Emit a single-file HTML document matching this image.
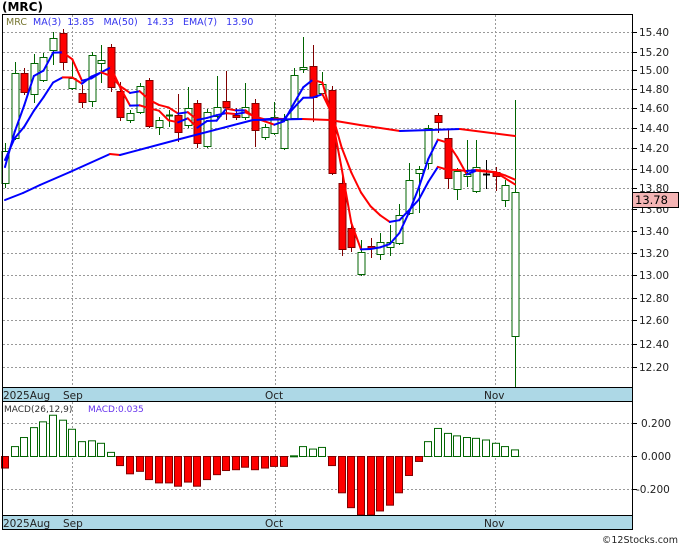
<!DOCTYPE html>
<html><head><meta charset="utf-8"><style>
body{margin:0;background:#fff;width:680px;height:546px;overflow:hidden;font-family:"DejaVu Sans",sans-serif}
svg{position:absolute;left:0;top:0}
</style></head><body>
<svg id="s" width="680" height="546" xmlns="http://www.w3.org/2000/svg" font-family="DejaVu Sans, Liberation Sans, sans-serif">
<rect x="0" y="0" width="680" height="546" fill="#fff"/>
<text x="2" y="11" font-size="12" font-weight="bold">(MRC)</text>
<g id="grid" stroke="#999" stroke-dasharray="2,2" stroke-width="1"></g>
<rect x="2.5" y="387.5" width="630" height="14" fill="#add8e6" stroke="#000"/>
<rect x="2.5" y="515.5" width="630" height="14" fill="#add8e6" stroke="#000"/>
<g font-size="10.5" fill="#222">
<text x="3" y="399">2025Aug</text><text x="63" y="399">Sep</text><text x="265" y="399">Oct</text><text x="484" y="399">Nov</text>
<text x="3" y="527">2025Aug</text><text x="63" y="527">Sep</text><text x="265" y="527">Oct</text><text x="484" y="527">Nov</text>
</g>
<g id="cand"></g>
<g id="lines" fill="none" stroke-width="2"></g>
<g id="macd"></g>
<rect x="2.5" y="14.5" width="630" height="373" fill="none" stroke="#000"/>
<rect x="2.5" y="401.5" width="630" height="114" fill="none" stroke="#000"/>
<g id="ticks" stroke="#000"></g>
<g id="plab" font-size="10.5" fill="#222"></g>
<text x="6" y="25" font-size="9.5" fill="#777733">MRC</text>
<text x="33" y="25" font-size="9.5" fill="#3333ee" xml:space="preserve">MA(3)  13.85   MA(50)   14.33   EMA(7)   13.90</text>
<text x="4" y="412" font-size="9" fill="#333">MACD(26,12,9)</text>
<text x="88" y="412" font-size="9" fill="#6633ee">MACD:0.035</text>
<rect x="632.5" y="192.5" width="46" height="15" fill="#f4b4b4" stroke="#000"/>
<text x="635" y="204" font-size="11.5" fill="#000">13.78</text>
<text x="678" y="543" font-size="9.5" fill="#222" text-anchor="end">©12Stocks.com</text>
</svg>
<script>
var NS="http://www.w3.org/2000/svg";
function el(p,t,a){var e=document.createElementNS(NS,t);for(var k in a)e.setAttribute(k,a[k]);document.getElementById(p).appendChild(e);return e;}
var pl=[[15.4,32],[15.2,52],[15.0,70],[14.8,89],[14.6,108],[14.4,128],[14.2,148],[14.0,169],[13.8,188],[13.6,209],[13.4,231],[13.2,253],[13.0,275],[12.8,298],[12.6,320],[12.4,344],[12.2,367]];
pl.forEach(function(p){el("grid","line",{x1:3,x2:632,y1:p[1]+.5,y2:p[1]+.5});
el("ticks","line",{x1:632,x2:637,y1:p[1]+.5,y2:p[1]+.5});
var t=el("plab","text",{x:639,y:p[1]+4});t.textContent=p[0].toFixed(2);});
[423,456,489].forEach(function(y,i){el("grid","line",{x1:3,x2:632,y1:y+.5,y2:y+.5});el("ticks","line",{x1:632,x2:637,y1:y+.5,y2:y+.5});
var t=el("plab","text",{x:i==2?636:641,y:y+4});t.textContent=["0.200","0.000","-0.200"][i];});
[72,275,495].forEach(function(x){el("grid","line",{x1:x+.5,x2:x+.5,y1:15,y2:387});el("grid","line",{x1:x+.5,x2:x+.5,y1:402,y2:515});});
var C=[["g",151,183,143,188],["g",73,138,62,140],["r",73,92,68,95],["g",63,94,54,103],["g",57,80,53,82],["g",38,50,32,65],["r",33,62,29,70],
["g",78,88,60,90],["r",93,102,85,108],["g",55,101,52,107],["g",60,63,45,83],["r",47,87,44,92],["r",91,117,82,121],["g",113,120,110,123],
["g",86,112,83,114],["r",80,126,78,128],["g",120,127,117,135],["g",115,116,110,127],["r",115,132,94,142],["g",108,125,87,128],
["r",103,143,100,148],["g",112,146,109,148],["g",107,116,76,118],["r",101,107,71,120],["r",115,117,108,120],["g",107,117,83,120],
["r",103,130,99,147],["g",127,137,124,140],["g",117,133,102,135],["g",120,148,114,150],["g",75,118,68,120],["g",67,69,37,73],
["r",66,97,45,122],["g",84,93,72,96],["r",90,173,86,175],["r",183,249,175,256],["r",228,247,225,252],["g",252,274,240,276],
["r",246,248,238,258],["g",242,254,233,260],["g",242,247,225,256],["g",215,243,204,245],["g",180,213,163,215],["g",169,173,166,213],
["g",128,163,125,169],["r",115,122,113,133],["r",138,178,129,189],["g",171,189,168,200],["g",174,176,140,187],["g",167,191,140,193],
["k",174,174,160,189],["r",172,176,167,191],["g",185,200,180,207],["g",192,336,100,387]];
var dx=9.62,x0=5;
var closes=[];
C.forEach(function(c,i){var x=Math.round(x0+dx*i)+.5;
var col=c[0]=="g"?"#006400":c[0]=="r"?"#800000":"#000";
el("cand","line",{x1:x,x2:x,y1:c[3],y2:c[4],stroke:col});
if(c[2]-c[1]<2){el("cand","line",{x1:x-3.5,x2:x+3.5,y1:c[1]+.5,y2:c[1]+.5,stroke:col,"stroke-width":2});}
else el("cand","rect",{x:x-3.5,y:c[1]+.5,width:7,height:c[2]-c[1],fill:c[0]=="r"?"#ff0000":"#fff",stroke:col});
closes.push(c[0]=="r"?c[2]:c[1]);});
function seg(pts){for(var i=1;i<pts.length;i++){var a=pts[i-1],b=pts[i];
el("lines","line",{x1:a[0],y1:a[1],x2:b[0],y2:b[1],stroke:(b[2]||(b[1]<=a[1]?"#0000ff":"#ff0000")),"stroke-linecap":"round"});}}
var ma=[],em=[],e=168,pc=[178,172].concat(closes);
for(var i=0;i<closes.length;i++){var x=x0+dx*i;ma.push([x,(pc[i]+pc[i+1]+pc[i+2])/3]);e=e+(closes[i]-e)*0.25;if(i==0)e=160;em.push([x,e]);}
seg(ma);seg(em);
seg([[5,200],[23,193],[40,185],[70,172],[110,154],[120,155],[180,139],[253,120],[303,119],[330,120,"#ff0000"],[360,125,"#ff0000"],[400,131,"#ff0000"],[460,129,"#0000ff"],[515,136,"#ff0000"]]);
var M=[-0.07,0.06,0.115,0.175,0.21,0.25,0.22,0.165,0.09,0.095,0.08,0.025,-0.055,-0.105,-0.09,-0.14,-0.16,-0.16,-0.18,-0.155,-0.18,-0.14,-0.11,-0.085,-0.08,-0.065,-0.08,-0.07,-0.06,-0.06,0.004,0.06,0.045,0.055,-0.055,-0.22,-0.31,-0.36,-0.36,-0.33,-0.295,-0.22,-0.115,-0.03,0.09,0.17,0.14,0.125,0.115,0.11,0.10,0.08,0.06,0.04];
M.forEach(function(v,i){var x=Math.round(x0+dx*i)-3.5;var h=v*165;var y0=456.5;
if(v>0)el("macd","rect",{x:x,y:y0-h,width:7,height:Math.max(h,1),fill:"#fff",stroke:"#006400"});
else{var yb=Math.min(y0-h,515);el("macd","rect",{x:x,y:y0,width:7,height:yb-y0,fill:"#ff0000",stroke:"#800000"});}});
</script>
</body></html>
